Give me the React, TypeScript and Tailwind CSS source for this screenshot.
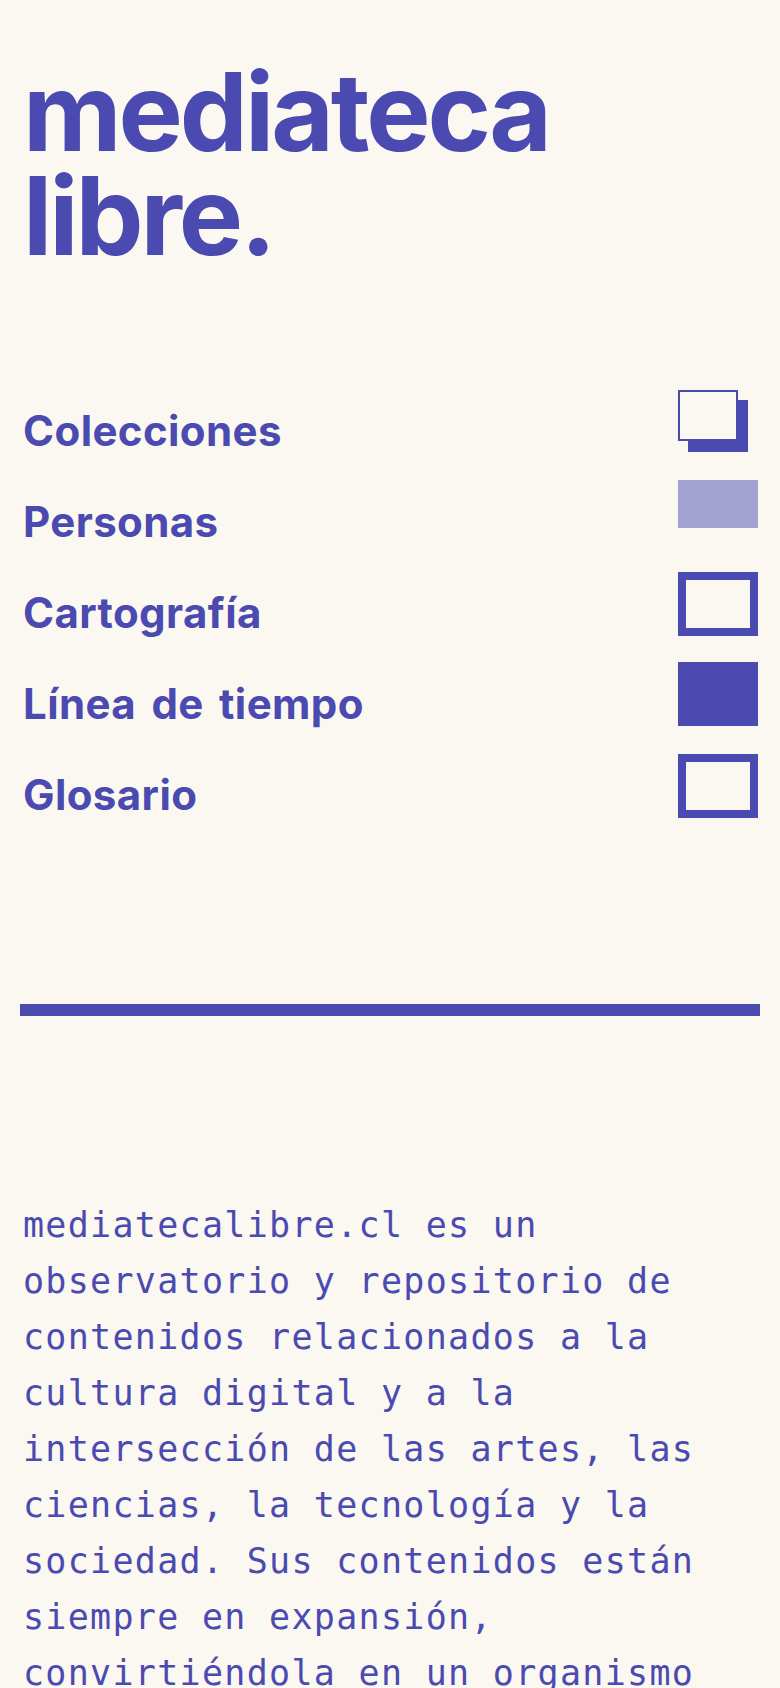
import React from 'react'

// Sections of the site, each with its own little mark on the right
const sections = [
  { label: 'Colecciones', mark: 'stack' },
  { label: 'Personas', mark: 'soft' },
  { label: 'Cartografía', mark: 'outline' },
  { label: 'Línea de tiempo', mark: 'solid' },
  { label: 'Glosario', mark: 'outline' },
]

function Mark({ kind }: { kind: string }) {
  if (kind === 'stack') {
    return (
      <div className="relative w-[70px] h-[62px] mr-[12px] mb-[3px]">
        <div className="absolute right-0 bottom-0 w-[60px] h-[52px] bg-[#4a4ab0]" />
        <div className="absolute left-0 top-0 w-[60px] h-[51px] border-2 border-[#4a4ab0] bg-[#faf8f1]" />
      </div>
    )
  }
  if (kind === 'soft') {
    return <div className="w-[80px] h-[48px] mr-[2px] mb-[18px] bg-[#a3a3d2]" />
  }
  if (kind === 'solid') {
    return <div className="w-[80px] h-[64px] mr-[2px] mb-[2px] bg-[#4a4ab0]" />
  }
  return <div className="w-[80px] h-[64px] mr-[2px] mb-[1px] border-[8px] border-[#4a4ab0]" />
}

export default function App() {
  return (
    <div className="min-h-screen bg-[#faf8f1] text-[#4a4ab0] px-5 pt-[60px] overflow-hidden">
      {/* Logo */}
      <h1 className="pl-[3px] font-['Inter',sans-serif] font-bold text-[108px] leading-[104px] tracking-[-0.028em]">
        mediateca
        <br />
        libre.
      </h1>

      {/* Navigation */}
      <nav className="mt-[96px]">
        {sections.map((s) => (
          <a key={s.label} href="#" className="flex items-end justify-between h-[91px]">
            <span className="pl-[3px] font-['Inter',sans-serif] font-bold text-[42px] leading-[48px] tracking-[0.4px] [word-spacing:5px]">
              {s.label}
            </span>
            <Mark kind={s.mark} />
          </a>
        ))}
      </nav>

      <hr className="mt-[185px] h-[12px] border-0 bg-[#4a4ab0]" />

      {/* About */}
      <p className="mt-[181px] pl-[3px] font-['DejaVu_Sans_Mono',monospace] text-[35px] leading-[56px] tracking-[1.3px]">
        mediatecalibre.cl es un observatorio y repositorio de contenidos relacionados a la cultura digital y a la
        intersección de las artes, las ciencias, la tecnología y la sociedad. Sus contenidos están siempre en
        expansión, convirtiéndola en un organismo vivo.
      </p>
    </div>
  )
}
